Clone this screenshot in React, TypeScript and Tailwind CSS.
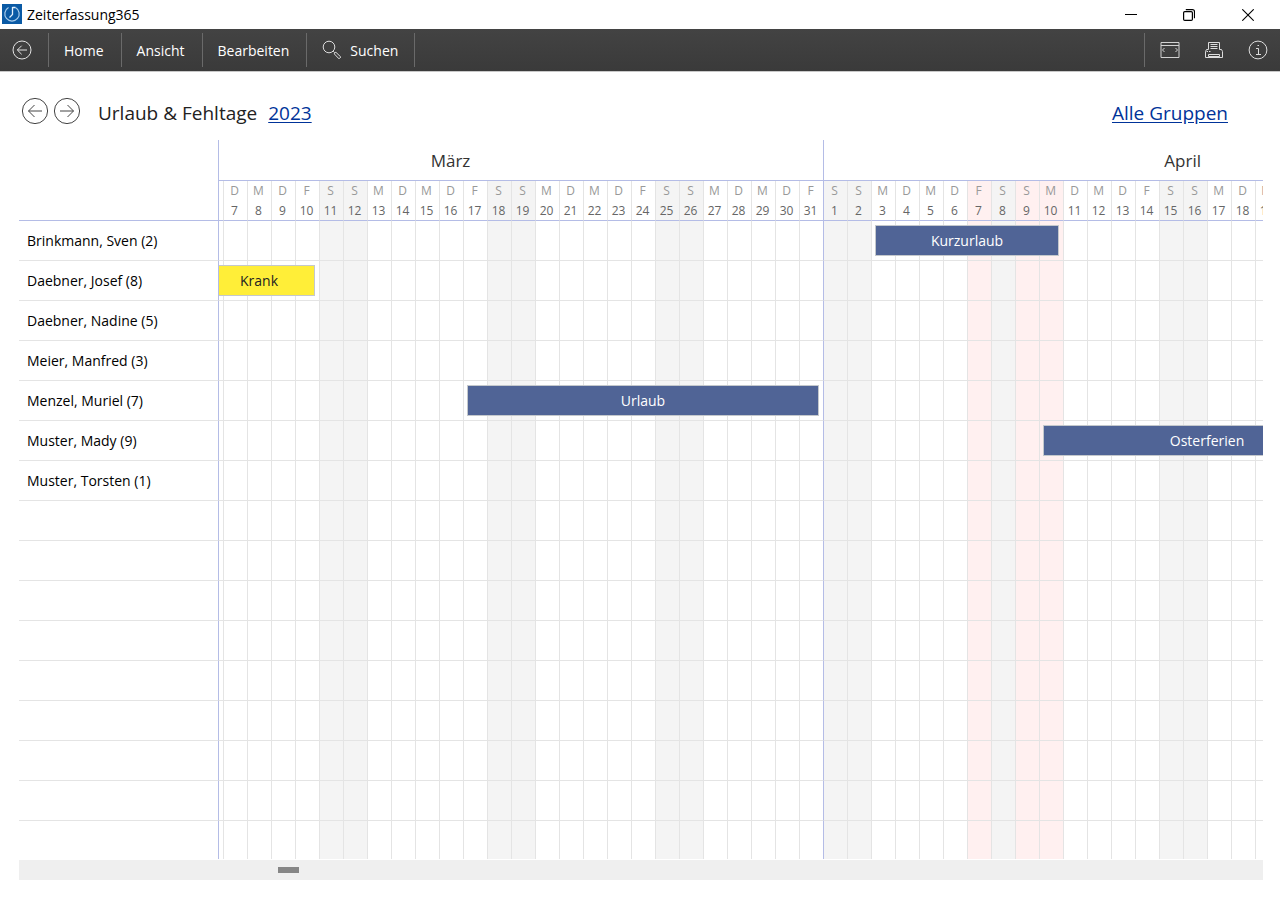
import { useLayoutEffect, useRef, useState } from 'react';

const DAY_WIDTH = 24;
const YEAR_OFFSET = 59 * DAY_WIDTH; // 1 March, counted from 1 January
const ROW_COUNT = 16;
const LETTERS = ['M', 'D', 'M', 'D', 'F', 'S', 'S'];

type Kind = 'vacation' | 'sick';

interface Absence {
  label: string;
  kind: Kind;
  start: number;
  days: number;
}

interface Employee {
  name: string;
  absences: Absence[];
}

const months = [
  { name: 'März', days: 31, holidays: [] as number[] },
  { name: 'April', days: 30, holidays: [7, 9, 10] },
];

const days = months
  .flatMap((month) =>
    Array.from({ length: month.days }, (_, i) => ({
      number: i + 1,
      holiday: month.holidays.includes(i + 1),
    })),
  )
  .map((day, i) => {
    const weekday = (i + 2) % 7;
    return { ...day, letter: LETTERS[weekday], weekend: weekday > 4, firstOfMonth: day.number === 1 };
  });

type Day = (typeof days)[number];

// start is the day index counted from 1 March
const employees: Employee[] = [
  { name: 'Brinkmann, Sven (2)', absences: [{ label: 'Kurzurlaub', kind: 'vacation', start: 33, days: 8 }] },
  { name: 'Daebner, Josef (8)', absences: [{ label: 'Krank', kind: 'sick', start: 5, days: 5 }] },
  { name: 'Daebner, Nadine (5)', absences: [] },
  { name: 'Meier, Manfred (3)', absences: [] },
  { name: 'Menzel, Muriel (7)', absences: [{ label: 'Urlaub', kind: 'vacation', start: 16, days: 15 }] },
  { name: 'Muster, Mady (9)', absences: [{ label: 'Osterferien', kind: 'vacation', start: 40, days: 14 }] },
  { name: 'Muster, Torsten (1)', absences: [] },
];

function dayColors(day: Day) {
  const fill = day.holiday ? 'bg-[#fff0f0]' : day.weekend ? 'bg-[#f4f4f4]' : 'bg-white';
  const line = day.firstOfMonth ? 'border-l-[#b4bce6]' : 'border-l-[#e4e4e4]';
  return `${fill} ${line}`;
}

function ArrowCircle({ direction, className }: { direction: 'left' | 'right'; className: string }) {
  return (
    <svg viewBox="0 0 28 28" className={className} fill="none" stroke="currentColor">
      <circle cx="14" cy="14" r="12.6" />
      {direction === 'left' ? <path d="M21 14H7.5M13.5 8l-6 6 6 6" /> : <path d="M7 14h13.5M14.5 8l6 6-6 6" />}
    </svg>
  );
}

function TitleBar() {
  return (
    <header className="flex h-[29px] items-center bg-white pl-0.5 text-black">
      <svg viewBox="0 0 20 20" className="mb-px size-5" fill="none">
        <rect width="20" height="20" fill="#0a5aa5" />
        <path d="M6.5 3.6A7.2 7.2 0 1 0 13.5 3.6" stroke="#a9cdec" strokeWidth="1.2" />
        <path d="M10.5 3v7.5l-3 3M10.5 3.5h3" stroke="#e3f0fb" strokeWidth="1.3" />
      </svg>
      <span className="ml-[5px] text-sm">Zeiterfassung365</span>
      <div className="ml-auto flex items-center">
        <button aria-label="Minimieren" className="flex h-7 w-[58px] items-center justify-center">
          <svg viewBox="0 0 12 12" className="size-3" stroke="currentColor">
            <path d="M0 5.5h12" />
          </svg>
        </button>
        <button aria-label="Verkleinern" className="flex h-7 w-[58px] items-center justify-center">
          <svg viewBox="0 0 12 12" className="size-3" fill="none" stroke="currentColor" strokeWidth="1.2">
            <rect x="0.6" y="2.6" width="8.8" height="8.8" rx="1.2" />
            <path d="M2.8 0.7h6.7a2 2 0 0 1 2 2v6.5" />
          </svg>
        </button>
        <button aria-label="Schließen" className="flex h-7 w-[62px] items-center justify-center pr-0.5">
          <svg viewBox="0 0 12 12" className="size-3" stroke="currentColor" strokeWidth="1.1">
            <path d="M0.3 0.3l11.4 11.4M11.7 0.3L0.3 11.7" />
          </svg>
        </button>
      </div>
    </header>
  );
}

function Toolbar() {
  return (
    <nav className="flex h-[43px] items-center border-b border-[#c8c8c8] bg-linear-to-b from-[#434343] to-[#3a3a3a] text-sm text-white">
      <button aria-label="Zurück" className="flex h-[34px] w-[49px] items-center border-r border-[#6a6a6a] pl-3">
        <ArrowCircle direction="left" className="size-5 stroke-[1.4] text-[#e4e4e4]" />
      </button>
      <button className="h-[34px] border-r border-[#6a6a6a] pt-0.5 pr-[17px] pl-[15px]">Home</button>
      <button className="h-[34px] border-r border-[#6a6a6a] pt-0.5 pr-[17px] pl-[15px]">Ansicht</button>
      <button className="h-[34px] border-r border-[#6a6a6a] pt-0.5 pr-[17px] pl-[15px]">Bearbeiten</button>
      <button className="flex h-[34px] items-center gap-2 border-r border-[#6a6a6a] pr-4 pl-[15px]">
        <svg viewBox="0 0 20 20" className="size-5" fill="none" stroke="#dddddd">
          <circle cx="7" cy="7" r="5.8" />
          <path d="M11.2 11.2l1.6 1.6" />
          <path d="M12.2 13.8l1.6-1.6 5 4.8-1.8 1.8z" />
        </svg>
        <span className="pt-0.5">Suchen</span>
      </button>
      <div className="ml-auto flex h-[34px] items-center gap-6 border-l border-[#6a6a6a] pr-3 pl-[15px]">
        <button aria-label="Fensterbreite">
          <svg viewBox="0 0 20 20" className="size-5" fill="none" stroke="#d2d2d2">
            <path d="M4.5 8l-2 2 2 2M15.5 8l2 2-2 2" />
            <path d="M1 2.5h18v15H1zM1 5.5h18" />
          </svg>
        </button>
        <button aria-label="Drucken">
          <svg viewBox="0 0 20 20" className="size-5" fill="none" stroke="#dddddd">
            <path d="M4.5 9.5v-7h11v7M6.5 4.5h7M6.5 6.5h7M6.5 8.5h7" />
            <path d="M4.5 9.5h-2l-1 2v6h17v-6l-1-2h-2" />
            <path d="M2.5 11.5h1.5M5 11.5h1.5M4.5 14.5h11v2h-11z" />
          </svg>
        </button>
        <button aria-label="Info">
          <svg viewBox="0 0 20 20" className="size-5" fill="none" stroke="#dddddd">
            <circle cx="10" cy="10" r="8.9" />
            <path d="M8 8.5h2.5v6M8 14.5h5M9.5 5.5h1.5" />
          </svg>
        </button>
      </div>
    </nav>
  );
}

function AbsenceBar({ absence }: { absence: Absence }) {
  const colors = absence.kind === 'sick' ? 'bg-[#ffee38] text-[#222222]' : 'bg-[#506496] text-white';
  return (
    <div
      className={`absolute top-1 left-[3px] z-10 flex h-[31px] items-center justify-center border border-[#c4c8cc] ${colors}`}
      style={{ width: absence.days * DAY_WIDTH - 8 }}
    >
      {absence.label}
    </div>
  );
}

function Calendar({ position }: { position: number }) {
  const viewport = useRef<HTMLDivElement>(null);

  useLayoutEffect(() => {
    if (viewport.current) viewport.current.scrollLeft = position - YEAR_OFFSET;
  }, [position]);

  return (
    <div ref={viewport} className="overflow-hidden">
      <table className="w-[1664px] table-fixed border-separate border-spacing-0 text-sm text-black">
        <colgroup>
          <col className="w-[200px]" />
          {days.map((_, i) => (
            <col key={i} className="w-6" />
          ))}
        </colgroup>
        <thead>
          <tr>
            <td className="sticky left-0 z-20 h-[41px] border-r border-[#b4bce6] bg-white p-0" />
            {months.map((month) => (
              <th
                key={month.name}
                colSpan={month.days}
                className="border-b border-l border-[#b4bce6] p-0 pt-0.5 pr-0.5 text-center text-[17px] font-normal text-[#333333]"
              >
                {month.name}
              </th>
            ))}
          </tr>
          <tr>
            <td className="sticky left-0 z-20 border-r border-b border-[#b4bce6] bg-white p-0" />
            {days.map((day, i) => (
              <th
                key={i}
                className={`h-10 border-b border-l border-b-[#b4bce6] p-0 pr-0.5 text-xs leading-5 font-normal text-[#666666] ${dayColors(day)}`}
              >
                <span className="block text-[#999999]">{day.letter}</span>
                <span className="block h-[19px]">{day.number}</span>
              </th>
            ))}
          </tr>
        </thead>
        <tbody>
          {Array.from({ length: ROW_COUNT }, (_, row) => {
            const employee = employees[row];
            const size = row === ROW_COUNT - 1 ? 'h-[38px]' : 'h-10 border-b';
            return (
              <tr key={row}>
                <th
                  scope="row"
                  className={`sticky left-0 z-20 border-r border-r-[#b4bce6] border-b-[#e4e4e4] bg-white p-0 pl-2 text-left font-normal ${size}`}
                >
                  {employee?.name}
                </th>
                {days.map((day, i) => {
                  const absence = employee?.absences.find((a) => a.start === i);
                  return (
                    <td key={i} className={`relative border-l border-b-[#e4e4e4] p-0 ${size} ${dayColors(day)}`}>
                      {absence && <AbsenceBar absence={absence} />}
                    </td>
                  );
                })}
              </tr>
            );
          })}
        </tbody>
      </table>
    </div>
  );
}

export default function App() {
  const [position, setPosition] = useState(1556);

  return (
    <div className="min-h-screen bg-white font-['Open_Sans',sans-serif]">
      <TitleBar />
      <Toolbar />
      <main className="pr-[17px] pl-[19px]">
        <div className="flex h-[68px] items-center pt-3.5 text-[19px] text-[#222222]">
          <div className="mb-1 flex gap-1 pl-0.5">
            <button aria-label="Vorheriges Jahr">
              <ArrowCircle direction="left" className="size-7 text-[#444444]" />
            </button>
            <button aria-label="Nächstes Jahr">
              <ArrowCircle direction="right" className="size-7 text-[#444444]" />
            </button>
          </div>
          <h1 className="ml-[17px]">Urlaub &amp; Fehltage</h1>
          <a href="#jahr" className="ml-[11px] text-[#003399] underline underline-offset-2">
            2023
          </a>
          <a href="#gruppen" className="mr-[35px] ml-auto text-[#003399] underline underline-offset-2">
            Alle Gruppen
          </a>
        </div>
        <Calendar position={position} />
        <input
          type="range"
          aria-label="Zeitraum"
          min={0}
          max={306 * DAY_WIDTH}
          value={position}
          onChange={(e) => setPosition(Number(e.target.value))}
          className="mt-px block h-5 w-full appearance-none bg-[#efefef] [&::-webkit-slider-thumb]:h-1.5 [&::-webkit-slider-thumb]:w-[21px] [&::-webkit-slider-thumb]:appearance-none [&::-webkit-slider-thumb]:bg-[#868686]"
        />
      </main>
    </div>
  );
}
